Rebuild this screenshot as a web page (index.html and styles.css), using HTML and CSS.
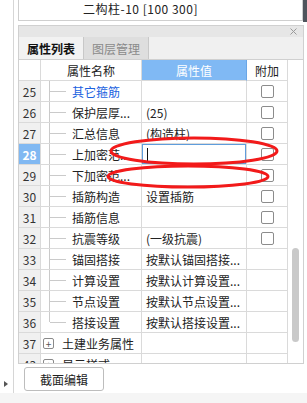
FILE: index.html
```html
<!DOCTYPE html>
<html lang="zh">
<head>
    <meta charset="UTF-8">
    <title>属性列表</title>
    <link rel="stylesheet" href="styles.css">
</head>
<body>

<div class="app">
    <div class="side"><span class="arrow"></span></div>
    <div class="main">
        <div class="top-row">
            <div class="preview">二构柱-10 [100 300]</div>
            <div class="preview-bar"></div>
        </div>
        <div class="panel">
            <div class="panel-title">
                <svg class="close" width="7" height="7" viewBox="0 0 7 7"><path d="M0.5 0.5L6.5 6.5M6.5 0.5L0.5 6.5" stroke="#9a9a9a" stroke-width="1"/></svg>
            </div>
            <div class="tabs">
                <div class="tab active">属性列表</div>
                <div class="tab">图层管理</div>
            </div>
            <div class="grid-wrap">
                <div class="grid">
                    <div class="row head">
                        <div class="cell num"></div>
                        <div class="cell name center">属性名称</div>
                        <div class="cell value center blue">属性值</div>
                        <div class="cell attach">附加</div>
                    </div>
                    <div class="row">
                        <div class="cell num">25</div>
                        <div class="cell name"><span class="tree"></span><span class="link">其它箍筋</span></div>
                        <div class="cell value"></div>
                        <div class="cell attach"><span class="check"></span></div>
                    </div>
                    <div class="row">
                        <div class="cell num">26</div>
                        <div class="cell name"><span class="tree"></span>保护层厚...</div>
                        <div class="cell value">(25)</div>
                        <div class="cell attach"><span class="check"></span></div>
                    </div>
                    <div class="row">
                        <div class="cell num">27</div>
                        <div class="cell name"><span class="tree"></span>汇总信息</div>
                        <div class="cell value">(构造柱)</div>
                        <div class="cell attach"><span class="check"></span></div>
                    </div>
                    <div class="row">
                        <div class="cell num selected">28</div>
                        <div class="cell name"><span class="tree"></span>上加密范...</div>
                        <div class="cell value edit"><span class="caret"></span></div>
                        <div class="cell attach"><span class="check"></span></div>
                    </div>
                    <div class="row">
                        <div class="cell num">29</div>
                        <div class="cell name"><span class="tree"></span>下加密范...</div>
                        <div class="cell value"></div>
                        <div class="cell attach"><span class="check"></span></div>
                    </div>
                    <div class="row">
                        <div class="cell num">30</div>
                        <div class="cell name"><span class="tree"></span>插筋构造</div>
                        <div class="cell value">设置插筋</div>
                        <div class="cell attach"><span class="check"></span></div>
                    </div>
                    <div class="row">
                        <div class="cell num">31</div>
                        <div class="cell name"><span class="tree"></span>插筋信息</div>
                        <div class="cell value"></div>
                        <div class="cell attach"><span class="check"></span></div>
                    </div>
                    <div class="row">
                        <div class="cell num">32</div>
                        <div class="cell name"><span class="tree"></span>抗震等级</div>
                        <div class="cell value">(一级抗震)</div>
                        <div class="cell attach"><span class="check"></span></div>
                    </div>
                    <div class="row">
                        <div class="cell num">33</div>
                        <div class="cell name"><span class="tree"></span>锚固搭接</div>
                        <div class="cell value">按默认锚固搭接...</div>
                        <div class="cell attach"></div>
                    </div>
                    <div class="row">
                        <div class="cell num">34</div>
                        <div class="cell name"><span class="tree"></span>计算设置</div>
                        <div class="cell value">按默认计算设置...</div>
                        <div class="cell attach"></div>
                    </div>
                    <div class="row">
                        <div class="cell num">35</div>
                        <div class="cell name"><span class="tree"></span>节点设置</div>
                        <div class="cell value">按默认节点设置...</div>
                        <div class="cell attach"></div>
                    </div>
                    <div class="row">
                        <div class="cell num">36</div>
                        <div class="cell name"><span class="tree last"></span>搭接设置</div>
                        <div class="cell value">按默认搭接设置...</div>
                        <div class="cell attach"></div>
                    </div>
                    <div class="row">
                        <div class="cell num">37</div>
                        <div class="cell name"><span class="plus">+</span>土建业务属性</div>
                        <div class="cell value"></div>
                        <div class="cell attach"></div>
                    </div>
                    <div class="row">
                        <div class="cell num">43</div>
                        <div class="cell name"><span class="plus">+</span>显示样式</div>
                        <div class="cell value"></div>
                        <div class="cell attach"></div>
                    </div>
                </div>
                <div class="scroll"><div class="thumb"></div></div>
            </div>
        </div>
        <div class="actions">
            <button class="btn">截面编辑</button>
        </div>
    </div>
</div>
<div class="footer"></div>

<svg class="marks" width="307" height="403" viewBox="0 0 307 403">
    <ellipse cx="194" cy="151" rx="83" ry="13" fill="none" stroke="#f21a1a" stroke-width="3"/>
    <ellipse cx="188" cy="176.5" rx="80" ry="10.5" fill="none" stroke="#f21a1a" stroke-width="3"/>
</svg>

</body>
</html>
```

FILE: styles.css
```css
body {
    margin: 0;
    font-family: "Noto Sans CJK SC", "Noto Sans", sans-serif;
    font-size: 12px;
    color: #222;
    background: #fff;
}
.app {
    display: flex;
    height: 393px;
}
.side {
    width: 13px;
    border-right: 1px solid #d6d6d6;
    display: flex;
    flex-direction: column;
    justify-content: flex-end;
}
.arrow {
    width: 0;
    height: 0;
    margin: 0 0 6px 4px;
    border-left: 4px solid #555;
    border-top: 3px solid transparent;
    border-bottom: 3px solid transparent;
}
.main {
    flex: 1;
    padding-left: 4px;
}
.top-row {
    display: flex;
    height: 22px;
}
.preview {
    flex: 1;
    height: 20px;
    border: 1px solid #cfcfcf;
    border-top: none;
    padding-left: 64px;
    line-height: 17px;
    letter-spacing: 0.5px;
    white-space: nowrap;
}
.preview-bar {
    width: 4px;
    background: #4f545c;
}
.panel {
    width: 286px;
    box-sizing: border-box;
    margin-top: 3px;
    border: 1px solid #d0d0d0;
}
.panel-title {
    height: 11px;
    background: #e6e6e6;
    display: flex;
    justify-content: flex-end;
    align-items: center;
    padding-right: 6px;
}
.tabs {
    display: flex;
    height: 22px;
    background: #f0f0f0;
    border-bottom: 1px solid #d0d0d0;
}
.tab {
    width: 64px;
    border-right: 1px solid #c8c8c8;
    display: flex;
    align-items: center;
    justify-content: center;
    background: #dedede;
    color: #8a8a8a;
}
.tab.active {
    background: #f2f2f2;
    color: #111;
    font-weight: bold;
}
.grid-wrap {
    display: flex;
    height: 303px;
    overflow: hidden;
}
.grid {
    width: 269px;
}
.row {
    display: grid;
    grid-template-columns: 22px 101px 105px 41px;
    height: 21px;
}
.cell {
    box-sizing: border-box;
    border-right: 1px solid #dadada;
    border-bottom: 1px solid #dadada;
    display: flex;
    align-items: center;
    white-space: nowrap;
    overflow: hidden;
    position: relative;
}
.center {
    justify-content: center;
}
.num {
    justify-content: center;
    background: #f0f0f0;
    color: #333;
}
.head .num {
    background: #fff;
}
.num.selected {
    background: #80b8f2;
    color: #fff;
    font-weight: bold;
}
.blue {
    background: #80b9f4;
    color: #fff;
    border-right-color: #6aa6e6;
}
.value {
    padding-left: 4px;
}
.value.center {
    padding-left: 0;
}
.attach {
    justify-content: center;
}
.tree {
    width: 23px;
    height: 100%;
    margin-left: 8px;
    flex-shrink: 0;
    background:
        linear-gradient(#cacaca, #cacaca) 0 0 / 1px 100% no-repeat,
        linear-gradient(#cacaca, #cacaca) 1px 50% / 16px 1px no-repeat;
}
.tree.last {
    background:
        linear-gradient(#cacaca, #cacaca) 0 0 / 1px 50% no-repeat,
        linear-gradient(#cacaca, #cacaca) 1px 50% / 16px 1px no-repeat;
}
.link {
    color: #1a62e0;
}
.plus {
    width: 9px;
    height: 9px;
    margin: 0 8px 0 2px;
    border: 1px solid #8a8a8a;
    border-radius: 2px;
    font-size: 10px;
    line-height: 9px;
    text-align: center;
    color: #555;
    flex-shrink: 0;
}
.check {
    width: 11px;
    height: 11px;
    border: 1px solid #8c8c8c;
    border-radius: 2px;
    background: #fff;
}
.edit {
    box-shadow: inset 0 0 0 1px #5f9ddc;
}
.caret {
    width: 1px;
    height: 13px;
    margin-left: 1px;
    background: #111;
}
.scroll {
    width: 15px;
}
.thumb {
    width: 7px;
    height: 94px;
    margin: 188px 0 0 4px;
    border-radius: 4px;
    background: #c9c9c9;
}
.actions {
    padding: 3px 0 0 6px;
}
.btn {
    width: 80px;
    height: 24px;
    border: 1px solid #bdbdbd;
    border-radius: 3px;
    background: #fff;
    font-family: inherit;
    font-size: 12px;
    color: #222;
    padding: 0;
}
.footer {
    height: 10px;
    background: #f5f5f5;
}
.marks {
    position: absolute;
    top: 0;
    left: 0;
    pointer-events: none;
}
```
